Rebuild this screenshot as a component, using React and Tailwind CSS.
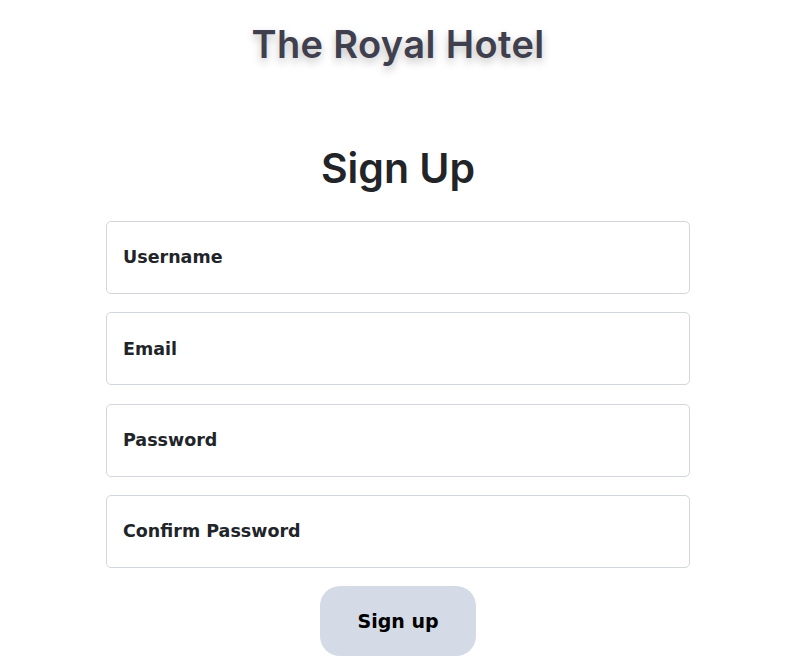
import React from "react";

const fields = ["Username", "Email", "Password", "Confirm Password"];

export default function App() {
  return (
    <div className="min-h-screen bg-white pl-[9px] font-['Inter',sans-serif] text-[#212529]">
      <header className="pt-[20px] text-center">
        <h1 className="text-[38px] font-semibold leading-[48px] tracking-[0.01em] text-[#3f3f4e] [text-shadow:0_4px_8px_rgba(0,0,0,0.25)]">
          The Royal Hotel
        </h1>
      </header>

      <main className="mx-auto mt-[74px] flex w-[584px] flex-col items-center">
        <h2 className="text-[41px] font-semibold leading-[52px] text-[#222428]">Sign Up</h2>

        <form className="mt-[27px] flex w-full flex-col gap-[18.33px] font-['DejaVu_Sans',sans-serif]">
          {fields.map((label) => (
            <div
              key={label}
              className="flex h-[73px] items-center rounded-[5px] border border-[#d3d6da] px-[16px]"
            >
              <span className="text-[17.5px] font-bold text-[#212529]">{label}</span>
            </div>
          ))}
        </form>

        <button
          type="button"
          className="mt-[18px] h-[70px] w-[156px] rounded-[20px] bg-[#d4dbe6] font-['DejaVu_Sans',sans-serif] text-[19px] font-bold text-black"
        >
          Sign up
        </button>
      </main>
    </div>
  );
}
